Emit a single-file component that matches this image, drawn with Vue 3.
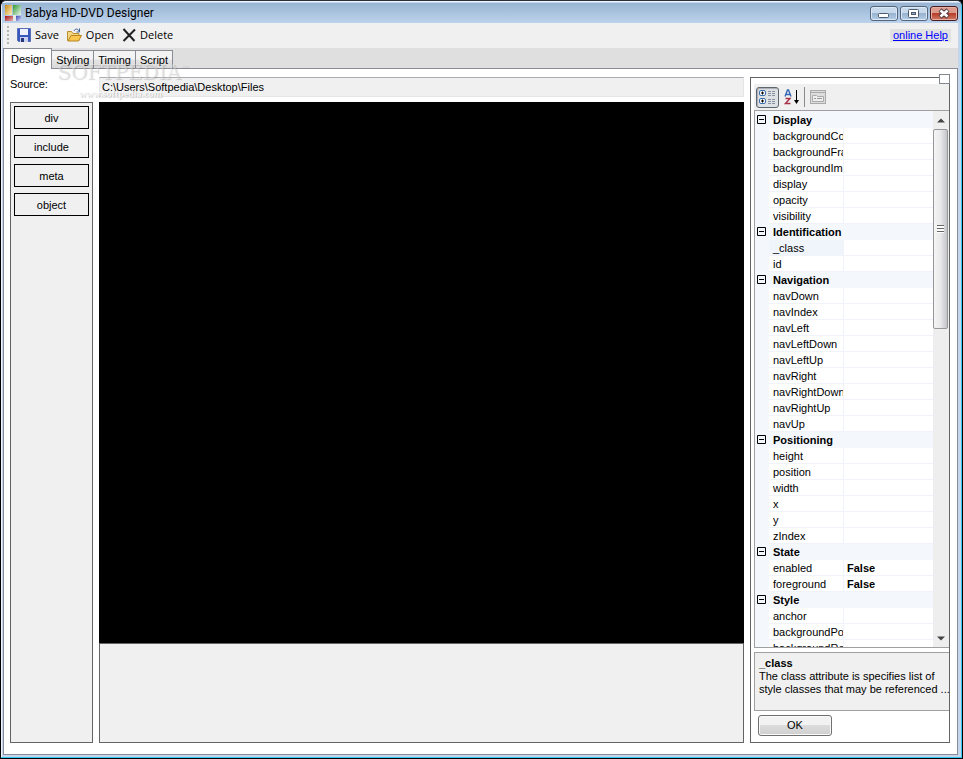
<script setup>
import { ref } from 'vue'

const tabs = ['Design', 'Styling', 'Timing', 'Script']
const activeTab = ref('Design')
const elements = ['div', 'include', 'meta', 'object']
const source = ref('C:\\Users\\Softpedia\\Desktop\\Files')
const selected = ref('_class')

const groups = [
  { name: 'Display', props: ['backgroundColor', 'backgroundFrame', 'backgroundImage', 'display', 'opacity', 'visibility'] },
  { name: 'Identification', props: ['_class', 'id'] },
  { name: 'Navigation', props: ['navDown', 'navIndex', 'navLeft', 'navLeftDown', 'navLeftUp', 'navRight', 'navRightDown', 'navRightUp', 'navUp'] },
  { name: 'Positioning', props: ['height', 'position', 'width', 'x', 'y', 'zIndex'] },
  { name: 'State', props: ['enabled', 'foreground'] },
  { name: 'Style', props: ['anchor', 'backgroundPosition', 'backgroundRepeat'] },
]
const values = { enabled: 'False', foreground: 'False' }
</script>

<template>
  <div class="window">
    <header class="titlebar">
      <svg class="app-icon" width="17" height="17" viewBox="0 0 17 17">
        <defs>
          <linearGradient id="ga" x2="1" y2="1"><stop stop-color="#c98a10" /><stop offset="1" stop-color="#fff0c4" /></linearGradient>
          <linearGradient id="gb" x2="1" y2="1"><stop stop-color="#2c9a33" /><stop offset="1" stop-color="#eef5ec" /></linearGradient>
          <linearGradient id="gc" x2="1" y2="1"><stop stop-color="#a51212" /><stop offset="1" stop-color="#e9b0b0" /></linearGradient>
          <linearGradient id="gd" x2="1" y2="1"><stop stop-color="#3f49b5" /><stop offset="1" stop-color="#d4d8f5" /></linearGradient>
        </defs>
        <rect width="7" height="10" fill="url(#ga)" />
        <rect x="8" width="8" height="10" fill="url(#gb)" />
        <rect y="11" width="8" height="5" fill="url(#gc)" />
        <rect x="8" y="10" width="3" height="6" fill="#e6e8ea" />
        <rect x="11" y="11" width="5" height="5" fill="url(#gd)" />
      </svg>
      <h1>Babya HD-DVD Designer</h1>
      <div class="captions">
        <button class="caption" aria-label="Minimize">
          <svg width="12" height="11"><rect x="0.5" y="5.5" width="10" height="4" rx="1" fill="#fff" stroke="#4d5a6c" /></svg>
        </button>
        <button class="caption" aria-label="Maximize">
          <svg width="12" height="11"><rect x="0.5" y="1.5" width="10" height="8" rx="1" fill="#fff" stroke="#4d5a6c" /><rect x="3.5" y="4.5" width="4" height="2" fill="#8fa9c6" stroke="#4d5a6c" /></svg>
        </button>
        <button class="caption close" aria-label="Close">
          <svg width="12" height="11"><path d="M2 2 10 9M10 2 2 9" stroke="#4d3a42" stroke-width="4.500" /><path d="M2.500 2.500 9.500 8.500M9.500 2.500 2.500 8.500" stroke="#fff" stroke-width="2.600" /></svg>
        </button>
      </div>
    </header>

    <div class="toolbar">
      <span class="grip"></span>
      <button class="tool">
        <svg width="14" height="14"><path d="M.5.5h13v13h-12l-1-1z" fill="#3958bd" stroke="#5a6fb8" /><rect x="3" y="1" width="8" height="6" fill="#eef2fc" /><rect x="3" y="9" width="8" height="5" fill="#c8d2ee" /><rect x="4" y="10" width="3" height="4" fill="#25367c" /></svg>
        Save
      </button>
      <button class="tool">
        <svg width="15" height="14"><path d="M.5 12.500V3.500h4l1.500 2h6v7z" fill="#f4d784" stroke="#b98f2f" /><path d="M1 13 4 7.500h10.500L11.500 13z" fill="#f9c750" stroke="#b98420" /><path d="M7 3C8 .5 11 .5 12 3M12.500.5V4H9.500" fill="none" stroke="#3c6199" /></svg>
        Open
      </button>
      <button class="tool">
        <svg width="14" height="14"><path d="M1.500 1 12.500 13M13 1.500 1.500 13" stroke="#222" stroke-width="2" fill="none" /></svg>
        Delete
      </button>
      <a class="help" href="#help">online Help</a>
    </div>

    <nav class="tabs" role="tablist">
      <button v-for="tab in tabs" :key="tab" role="tab" class="tab" :class="{ active: tab === activeTab }" :aria-selected="tab === activeTab" @click="activeTab = tab">{{ tab }}</button>
    </nav>

    <main class="page">
      <section class="palette-column">
        <label for="source">Source:</label>
        <div class="palette">
          <button v-for="name in elements" :key="name">{{ name }}</button>
        </div>
      </section>

      <section class="stage-column">
        <input id="source" v-model="source" type="text" readonly>
        <div class="stage"></div>
        <div class="tray"></div>
      </section>

      <aside class="properties">
        <button class="corner" aria-label="Toggle panel"></button>
        <div class="prop-tools">
          <button class="prop-tool pressed" aria-label="Categorized">
            <svg width="18" height="16"><g fill="#fff" stroke="#3b6fae"><rect x=".5" y="1.500" width="6" height="5" rx="1.500" /><rect x=".5" y="9.500" width="6" height="5" rx="1.500" /></g><path d="M2 4h3M3.500 2.500v3M2 12h3M3.500 10.500v3" stroke="#000" /><path d="M9 2.500h8M9 4.500h8M9 6.500h8M9 10.500h8M9 12.500h8M9 14.500h8" stroke="#8792a3" stroke-dasharray="3 1" /></svg>
          </button>
          <button class="prop-tool" aria-label="Alphabetical">
            <svg width="16" height="16"><path d="M1 7.500 3.500 1h1L7 7.500M2.500 5.500h3.500" fill="none" stroke="#3566b4" stroke-width="1.400" /><path d="M1.500 9.500H6L1.500 14.500H6.500" fill="none" stroke="#a83248" stroke-width="1.400" /><path d="M12.500 1v13" fill="none" stroke="#000" /><path d="M10 11h5l-2.500 4z" /></svg>
          </button>
          <span class="separator"></span>
          <button class="prop-tool" aria-label="Property pages" disabled>
            <svg width="16" height="15"><rect x=".5" y=".5" width="15" height="13" fill="#ddd" stroke="#aaa" /><path d="M1 2.500h14" stroke="#aaa" /><path d="M2.500 11.500v-6h4l1 1h6v5z" fill="#eee" stroke="#aaa" /><path d="M4 8.500h2M7 8.500h5" stroke="#999" /></svg>
          </button>
        </div>

        <div class="grid">
          <div class="rows">
            <table>
              <colgroup><col class="gutter"><col class="name"><col></colgroup>
              <tbody v-for="group in groups" :key="group.name">
                <tr class="category">
                  <td><button class="toggle" :aria-label="'Collapse ' + group.name"><svg width="9" height="9"><path d="M.5.5h8v8h-8zM2 4.500h5" fill="none" stroke="#000" /></svg></button></td>
                  <th colspan="2">{{ group.name }}</th>
                </tr>
                <tr v-for="prop in group.props" :key="prop" :class="{ selected: prop === selected }" @click="selected = prop">
                  <td></td>
                  <td class="key">{{ prop }}</td>
                  <td class="value">{{ values[prop] }}</td>
                </tr>
              </tbody>
            </table>
          </div>
          <div class="scrollbar">
            <button aria-label="Scroll up"><svg width="8" height="5"><path d="M0 4.500 4 .5 8 4.500z" fill="#444" /></svg></button>
            <div class="track"><div class="thumb"><i></i></div></div>
            <button aria-label="Scroll down"><svg width="8" height="5"><path d="M0 .5H8L4 4.500z" fill="#444" /></svg></button>
          </div>
        </div>

        <div class="description">
          <h2>_class</h2>
          <p>The class attribute is specifies list of style classes that may be referenced ...</p>
        </div>
        <button class="ok">OK</button>
      </aside>
    </main>

    <div class="watermark" aria-hidden="true">
      <span class="brand">SOFTPEDIA<sup>™</sup></span>
      <span class="site">www.softpedia.com</span>
    </div>
  </div>
</template>

<style>
body { margin: 0; background: #000; }
</style>

<style scoped>
* { box-sizing: border-box; }
button, input { font: inherit; color: inherit; padding: 0; border: 0; margin: 0; background: none; border-radius: 0; }
button svg { display: block; flex: none; }
h1, h2, p { margin: 0; font-size: inherit; }

.window {
  position: relative;
  display: flex;
  flex-direction: column;
  height: 100vh;
  min-height: 500px;
  padding: 2px 4px 3px 2px;
  border: 1px solid #000;
  border-top-color: #2b2f38;
  border-radius: 6px 6px 0 0;
  background: #c3d6ee;
  box-shadow: inset -1px -1px #35c9f2, inset 1px 1px #eef5fc;
  font: 11px/13px "Liberation Sans", Arial, sans-serif;
  color: #000;
}

.titlebar {
  display: flex;
  align-items: center;
  flex: none;
  height: 20px;
  margin: 0 -3px 0 -1px;
  padding: 0 3px;
  background: linear-gradient(#98b4d2, #bcd2ec);
}
.titlebar h1 { margin-left: 3px; flex: 1; font: 12px/18px Roboto, "Open Sans", sans-serif; }
.captions { display: flex; gap: 2px; }
.caption {
  display: grid;
  place-items: center;
  width: 28px;
  height: 15px;
  border: 1px solid #53657d;
  border-radius: 3px;
  background: linear-gradient(#c8d9ec 45%, #98b3d0 50%, #b6cde5);
  box-shadow: inset 0 0 0 1px #dce8f5;
}
.caption.close { border-color: #491b1e; background: linear-gradient(#dc9b8d 45%, #b73f2b 50%, #cf7862); box-shadow: inset 0 0 0 1px #e6b0a4; }

.toolbar {
  display: flex;
  align-items: center;
  flex: none;
  height: 25px;
  gap: 8px;
  padding: 0 7px 1px 4px;
  background: #f0f0f0;
  font: 11px/16px "Open Sans", "Noto Sans", sans-serif;
}
.grip { width: 2px; height: 18px; background: repeating-linear-gradient(#b4b4b4 0 2px, transparent 2px 4px); }
.tool { display: flex; align-items: center; gap: 4px; }
.help { margin-left: auto; padding: 0 3px; background: #e1e1e1; color: #00f; font: 11px/13px "Liberation Sans", Arial, sans-serif; }

.tabs { display: flex; align-items: flex-end; flex: none; height: 20px; background: #dfdfdf; }
.tab {
  height: 18px;
  padding: 2px 4px 0;
  border: 1px solid #898c95;
  border-left-width: 0;
  border-bottom: 0;
  background: linear-gradient(#f3f3f3 45%, #e3e3e3 55%, #dadada);
}
.tab.active { height: 21px; margin-bottom: -1px; padding: 0 6px 0 7px; border-left-width: 1px; background: #fff; z-index: 1; }

.page {
  display: grid;
  grid-template-columns: 83px 1fr 200px;
  gap: 6px;
  flex: 1;
  min-height: 0;
  padding: 8px 7px 11px 6px;
  border: 1px solid #898c95;
  background: #fff;
}
.palette-column, .stage-column { display: flex; flex-direction: column; min-height: 0; }
.palette-column label { height: 25px; padding-top: 1px; }
.palette { display: flex; flex-direction: column; gap: 6px; flex: 1; padding: 3px; border: 1px solid #646464; background: #f0f0f0; }
.palette button { height: 23px; padding-top: 2px; border: 1px solid #000; }

#source { flex: none; height: 20px; margin-bottom: 5px; padding: 0 2px; border: 1px solid #e3e5e8; border-top-color: #abadb3; background: #f0f0f0; }
.stage { flex: 1; background: #000; }
.tray { flex: none; height: 100px; border: 1px solid #646464; background: #f0f0f0; }

.properties { position: relative; display: flex; flex-direction: column; min-height: 0; padding: 6px 0 6px 3px; border: 1px solid #646464; }
.corner { position: absolute; top: -4px; right: -1px; width: 11px; height: 10px; border: 1px solid #828790; background: #fff; }
.prop-tools { display: flex; align-items: center; flex: none; height: 26px; gap: 1px; padding: 0 2px; background: #f0f0f0; }
.prop-tool { display: grid; place-items: center; width: 23px; height: 21px; }
.prop-tool.pressed { border: 1px solid #5c6770; border-radius: 3px; background: #dfe2e5; box-shadow: inset 1px 1px 1px #a9adb3; }
.separator { width: 1px; height: 20px; background: #8c8c8c; }
.grid { display: flex; flex: 1; min-height: 0; border: 1px solid #a0a0a0; border-right: 0; }
.rows { flex: 1; min-width: 0; padding-top: 1px; overflow: hidden; background: #f4f7fc; }
table { width: 100%; table-layout: fixed; border-collapse: separate; border-spacing: 0; }
col.gutter { width: 14px; }
col.name { width: 75px; }
tr { height: 16px; }
td, th { height: 16px; padding: 0; line-height: 13px; text-align: left; vertical-align: top; white-space: nowrap; overflow: hidden; }
th { padding: 2px 0 0 4px; }
.toggle { display: block; margin: 3px 0 0 2px; }
.key, .value { padding-top: 2px; border-bottom: 1px solid #f0f3f9; background: #fff; }
.key { padding-left: 4px; border-right: 1px solid #f0f3f9; }
.value { padding-left: 3px; font-weight: bold; }
.selected .key { background: #f0f4fb; }

.scrollbar { display: flex; flex-direction: column; width: 16px; background: #eee; }
.scrollbar button { display: grid; place-items: center; height: 18px; }
.track { flex: 1; min-height: 0; }
.thumb { display: grid; place-items: center; width: 15px; height: 40%; border: 1px solid #979797; border-radius: 2px; background: linear-gradient(90deg, #f5f5f5, #e9e9eb 50%, #c4c5c9); }
.thumb i { width: 7px; height: 8px; background: repeating-linear-gradient(#666 0 1px, #fff 1px 3px); }

.description { flex: none; height: 59px; margin-top: 4px; padding: 3px 0 0 4px; border: 1px solid #a0a0a0; border-right: 0; background: #f0f0f0; }
.description h2 { line-height: 14px; }
.description p { margin-right: -4px; }
.ok { flex: none; width: 74px; height: 21px; margin: 4px 0 0 4px; border: 1px solid #707070; border-radius: 3px; background: linear-gradient(#f2f2f2 45%, #dcdcdc 50%, #cfcfcf); box-shadow: inset 0 0 0 1px #fafafa; }

.watermark { position: absolute; top: 59px; left: 56px; display: flex; flex-direction: column; pointer-events: none; }
.brand { font: 20px/24px "DejaVu Serif", serif; color: rgba(240, 240, 240, 0.4); text-shadow: 1px 1px 1px rgba(90, 90, 90, 0.25); }
.brand sup { font-size: 8px; line-height: 8px; }
.site { margin: 3px 0 0 22px; font: bold 10px/14px "Liberation Serif", serif; color: rgba(255, 255, 255, 0.7); text-shadow: 1px 1px 1px rgba(90, 90, 90, 0.3); }
</style>
